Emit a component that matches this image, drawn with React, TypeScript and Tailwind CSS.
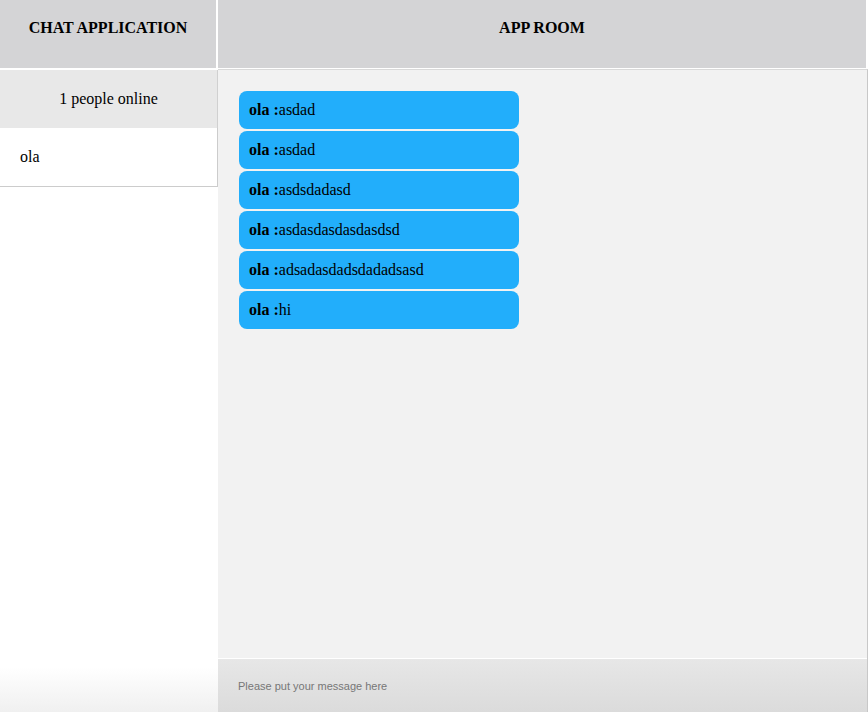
import React from 'react';

const messages = [
  { user: 'ola', text: 'asdad' },
  { user: 'ola', text: 'asdad' },
  { user: 'ola', text: 'asdsdadasd' },
  { user: 'ola', text: 'asdasdasdasdasdsd' },
  { user: 'ola', text: 'adsadasdadsdadadsasd' },
  { user: 'ola', text: 'hi' },
];

const App: React.FC = () => {
  return (
    <div className="w-[868px] h-[712px] flex flex-col bg-white text-black font-['Liberation_Serif',serif] text-[16px] overflow-hidden">
      <header className="flex h-[69px] shrink-0 border-b border-white">
        <div className="w-[216px] bg-[#d4d4d6] flex justify-center pt-[19px]">
          <h1 className="font-bold leading-[18px]">CHAT APPLICATION</h1>
        </div>
        <div className="w-[2px] bg-white" />
        <div className="flex-1 bg-[#d4d4d6] flex justify-center pt-[19px] mr-[2px]">
          <h2 className="font-bold leading-[18px]">APP ROOM</h2>
        </div>
      </header>

      <div className="flex flex-1 min-h-0">
        <aside className="w-[218px] shrink-0 flex flex-col border-t border-white bg-gradient-to-b from-white from-[93%] to-[#f0f0f0]">
          <div className="h-[58px] bg-[#e8e8e8] border-r border-[#d0d0d0] flex items-center justify-center">1 people online</div>
          <ul className="border-b border-r border-[#cccccc]">
            <li className="h-[58px] flex items-center px-[20px] bg-white">ola</li>
          </ul>
        </aside>

        <main className="flex-1 flex flex-col bg-[#f2f2f2] border-t border-[#d9d9d9] border-r border-r-[#c8c8c8]">
          <div className="flex-1 pt-[21px] pl-[21px] flex flex-col gap-[2px]">
            {messages.map((m, i) => (
              <div key={i} className="w-[280px] h-[38px] rounded-[8px] bg-[#22aefb] flex items-center px-[10px]">
                <span className="font-bold">{m.user} :</span>
                <span>{m.text}</span>
              </div>
            ))}
          </div>
          <div className="h-[54px] border-t border-white bg-gradient-to-b from-[#e7e7e7] to-[#dbdbdb] flex items-center px-[20px]">
            <input
              type="text"
              placeholder="Please put your message here"
              className="w-full bg-transparent outline-none text-[11px] font-['Liberation_Sans',sans-serif] placeholder:text-[#777777] mt-[1px]"
            />
          </div>
        </main>
      </div>
    </div>
  );
};

export default App;
